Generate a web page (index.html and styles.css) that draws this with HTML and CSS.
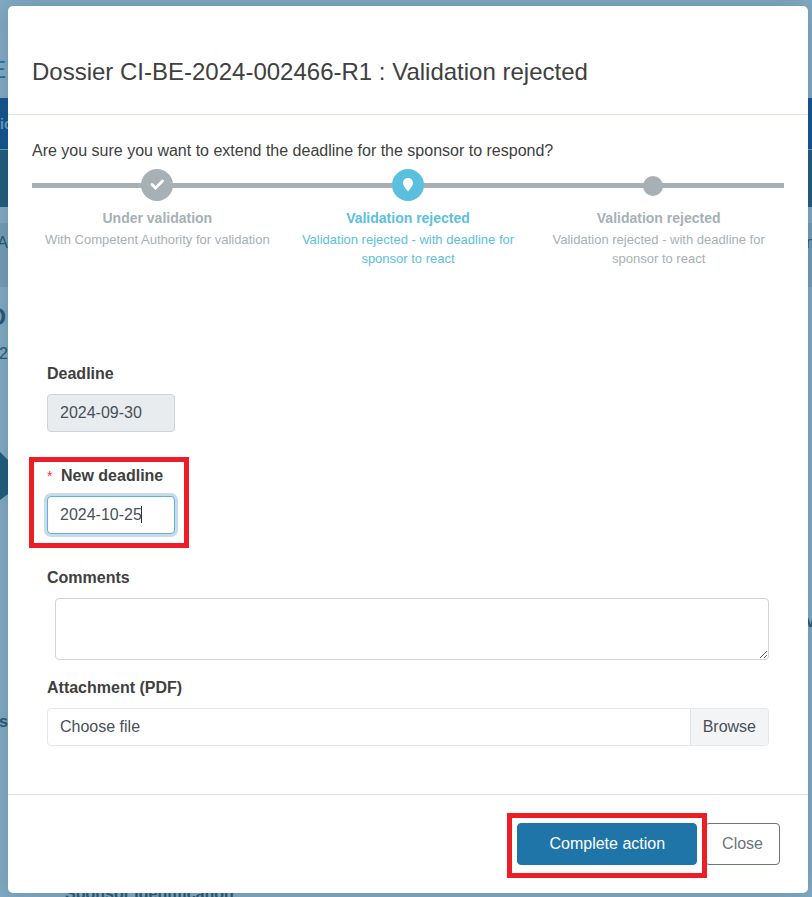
FILE: index.html
```html
<!DOCTYPE html>
<html lang="en">
<head>
<meta charset="utf-8">
<meta name="viewport" content="width=device-width, initial-scale=1">
<title>Validation rejected</title>
<link rel="stylesheet" href="styles.css">
</head>
<body>
<div class="page" aria-hidden="true">
  <div class="page-brand"><span class="edge">E</span></div>
  <div class="page-nav"><span class="edge edge-start">ic</span></div>
  <div class="page-banner"></div>
  <div class="page-crumb"><span class="edge">A</span><span class="edge edge-right">n</span></div>
  <div class="page-title"><span class="edge">D</span></div>
  <div class="page-meta"><span class="edge">2</span></div>
  <svg class="page-step" width="8" height="48" viewBox="0 0 8 48"><path d="M0 0L8 8V42L0 48Z"/></svg>
  <div class="page-side"><span></span><span class="edge edge-right">v</span></div>
  <div class="page-side"><span class="edge">ts</span></div>
  <div class="page-section">Sponsor Identification</div>
</div>

<main class="dialog" role="dialog" aria-labelledby="dialog-title">
  <header class="dialog-header">
    <h1 id="dialog-title">Dossier CI-BE-2024-002466-R1 : Validation rejected</h1>
  </header>

  <form class="dialog-form">
    <div class="dialog-body">
      <p class="question">Are you sure you want to extend the deadline for the sponsor to respond?</p>

      <ol class="steps">
        <li class="step">
          <span class="marker">
            <svg width="32" height="32" viewBox="0 0 32 32"><circle cx="16" cy="16" r="16"/><path class="tick" d="M11 15.500L14.500 19L21.500 12"/></svg>
          </span>
          <strong>Under validation</strong>
          <span class="step-text">With Competent Authority for validation</span>
        </li>
        <li class="step step-current">
          <span class="marker">
            <svg width="32" height="32" viewBox="0 0 32 32"><circle cx="16" cy="16" r="16"/><path class="pin" d="M16 9C13 9 11 11.200 11 13.900C11 16.300 13.500 19.300 16 22.500C18.500 19.300 21 16.300 21 13.900C21 11.200 19 9 16 9Z"/></svg>
          </span>
          <strong>Validation rejected</strong>
          <span class="step-text">Validation rejected - with deadline for sponsor to react</span>
        </li>
        <li class="step">
          <span class="marker">
            <svg width="32" height="32" viewBox="0 0 32 32"><circle cx="10" cy="17" r="10"/></svg>
          </span>
          <strong>Validation rejected</strong>
          <span class="step-text">Validation rejected - with deadline for sponsor to react</span>
        </li>
      </ol>

      <div class="fields">
        <div class="field field-date">
          <label for="deadline">Deadline</label>
          <input class="control" id="deadline" type="text" value="2024-09-30" disabled>
        </div>
        <div class="field field-date field-marked">
          <label for="new-deadline"><span class="required">*</span>New deadline</label>
          <input class="control control-active" id="new-deadline" type="text" value="2024-10-25" required>
          <span class="caret"></span>
        </div>
        <div class="field">
          <label for="comments">Comments</label>
          <textarea class="control" id="comments" rows="2"></textarea>
        </div>
        <div class="field">
          <label for="attachment">Attachment (PDF)</label>
          <div class="file">
            <input id="attachment" type="file" accept="application/pdf">
            <label class="file-face" for="attachment"><span class="file-name">Choose file</span><span class="file-browse">Browse</span></label>
          </div>
        </div>
      </div>
    </div>

    <footer class="dialog-footer">
      <span class="primary-wrap"><button class="button button-primary" type="button">Complete action</button></span>
      <button class="button button-outline" type="button">Close</button>
    </footer>
  </form>
</main>
</body>
</html>
```
FILE: styles.css
```css
* {
  box-sizing: border-box;
}

body {
  margin: 0;
  padding: 6px 4px 4px 8px;
  position: relative;
  background: #83aac2;
  color: #404040;
  font: 16px/24px "Liberation Sans", Arial, sans-serif;
}

/* Dimmed page behind the dialog */
.page {
  position: absolute;
  inset: 0;
  overflow: hidden;
  color: #285672;
}

.page > div {
  display: flex;
  justify-content: space-between;
  align-items: center;
}

.edge {
  display: flex;
  justify-content: flex-end;
  width: 8px;
}

.edge-start {
  justify-content: flex-start;
}

.edge-right {
  justify-content: flex-start;
  width: 6px;
}

.page-brand {
  height: 98px;
  padding-top: 42px;
  color: #1c6fa3;
  font-size: 24px;
}

.page-brand .edge {
  padding-right: 2px;
}

.page-nav {
  height: 52px;
  background: #12528c;
  border-bottom: 1px solid #6f9dbd;
  color: #6d9dbf;
  font-size: 14px;
  font-weight: bold;
}

.page-banner {
  height: 57px;
  background: #205b79;
}

.page-crumb {
  height: 64px;
  margin-top: 16px;
  padding-bottom: 24px;
  background: #769db5;
}

.page-title {
  margin-top: 18px;
  font-size: 24px;
  font-weight: bold;
}

.page-title .edge {
  padding-right: 2px;
}

.page-meta {
  margin-top: 13px;
}

.page-step {
  display: block;
  margin-top: 86px;
  fill: #205b79;
}

.page-side {
  height: 100px;
  margin-top: 72px;
  font-weight: bold;
}

.page-side + .page-side {
  margin-top: 0;
}

.page-section {
  margin-top: 110px;
  padding-left: 65px;
  font-weight: bold;
}

/* Dialog */
.dialog {
  position: relative;
  background: #fff;
  border-radius: 5px;
  box-shadow: 0 0 24px rgba(40, 85, 115, 0.3);
}

.dialog-header {
  padding: 48px 24px 24px;
  border-bottom: 1px solid #dcdfe9;
}

h1 {
  margin: 0;
  font-size: 24px;
  font-weight: normal;
  line-height: 36px;
}

.dialog-form {
  margin: 0;
}

.dialog-body {
  padding: 24px 24px 48px;
}

.question {
  margin: 0 0 6px;
}

/* Progress steps */
.steps {
  display: grid;
  grid-template-columns: repeat(3, 1fr);
  margin: 0;
  padding: 0;
  list-style: none;
  color: #a7b0b5;
}

.step {
  display: flex;
  flex-direction: column;
  align-items: center;
  text-align: center;
}

.step-current {
  color: #5bc0de;
}

.marker {
  display: flex;
  justify-content: center;
  width: 100%;
  height: 32px;
  margin-bottom: 7px;
  background: linear-gradient(#a7b0b5, #a7b0b5) 0 14px / 100% 5px no-repeat;
}

.marker svg {
  fill: currentColor;
}

.marker .tick {
  fill: none;
  stroke: #fff;
  stroke-width: 3;
  stroke-linecap: round;
}

.marker .pin {
  fill: #fff;
}

.step strong {
  font-size: 14px;
  line-height: 20px;
}

.step-text {
  padding: 0 12px;
  margin-top: 2px;
  font-size: 13px;
  line-height: 19px;
}

/* Form fields */
.fields {
  display: flex;
  flex-direction: column;
  gap: 16px;
  padding: 94px 15px 0;
}

.field {
  display: flex;
  flex-direction: column;
  gap: 8px;
  position: relative;
  font-weight: bold;
}

.field-date {
  width: 128px;
  margin-bottom: 16px;
}

.control {
  width: 100%;
  height: 38px;
  padding: 6px 12px;
  border: 1px solid #ced4da;
  border-radius: 4px;
  background: #fff;
  color: #495057;
  font: inherit;
  font-weight: normal;
}

.control:disabled {
  background: #e9ecef;
}

.control-active {
  border-color: #5eb2e2;
  box-shadow: 0 0 0 3px #c8dbe8;
  outline: none;
}

textarea.control {
  width: auto;
  height: 62px;
  margin-left: 8px;
  resize: vertical;
}

.required {
  display: inline-block;
  width: 14px;
  color: #f5333f;
  font-size: 14px;
  font-weight: normal;
}

.caret {
  position: absolute;
  left: 94px;
  bottom: 11px;
  width: 1px;
  height: 17px;
  background: #303030;
}

/* Highlight frames */
.field-marked::after,
.primary-wrap::after {
  content: "";
  position: absolute;
  border: 5px solid #ee1c25;
  pointer-events: none;
  z-index: 1;
}

.field-marked::after {
  inset: -7px -14px -14px -18px;
}

.primary-wrap::after {
  inset: -10px -10px -13px;
}

.file {
  position: relative;
  font-weight: normal;
}

.file input {
  position: absolute;
  inset: 0;
  width: 100%;
  opacity: 0;
}

.file-face {
  display: flex;
  height: 38px;
  border: 1px solid #e5e7e9;
  border-radius: 4px;
  overflow: hidden;
  color: #495057;
}

.file-name {
  flex: 1;
  padding: 6px 12px;
}

.file-browse {
  padding: 6px 12px;
  background: #f3f4f6;
  border-left: 1px solid #e0e2e5;
}

.dialog-footer {
  display: flex;
  justify-content: flex-end;
  gap: 8px;
  padding: 28px;
  border-top: 1px solid #dee2e6;
}

.primary-wrap {
  display: flex;
  position: relative;
}

.button {
  height: 42px;
  padding: 0 16px;
  border: 1px solid #6c757d;
  border-radius: 4px;
  background: #fff;
  color: #6c757d;
  font: inherit;
}

.button-primary {
  padding: 0 31px;
  border-color: #2075a8;
  background: #2075a8;
  color: #fff;
}
```
